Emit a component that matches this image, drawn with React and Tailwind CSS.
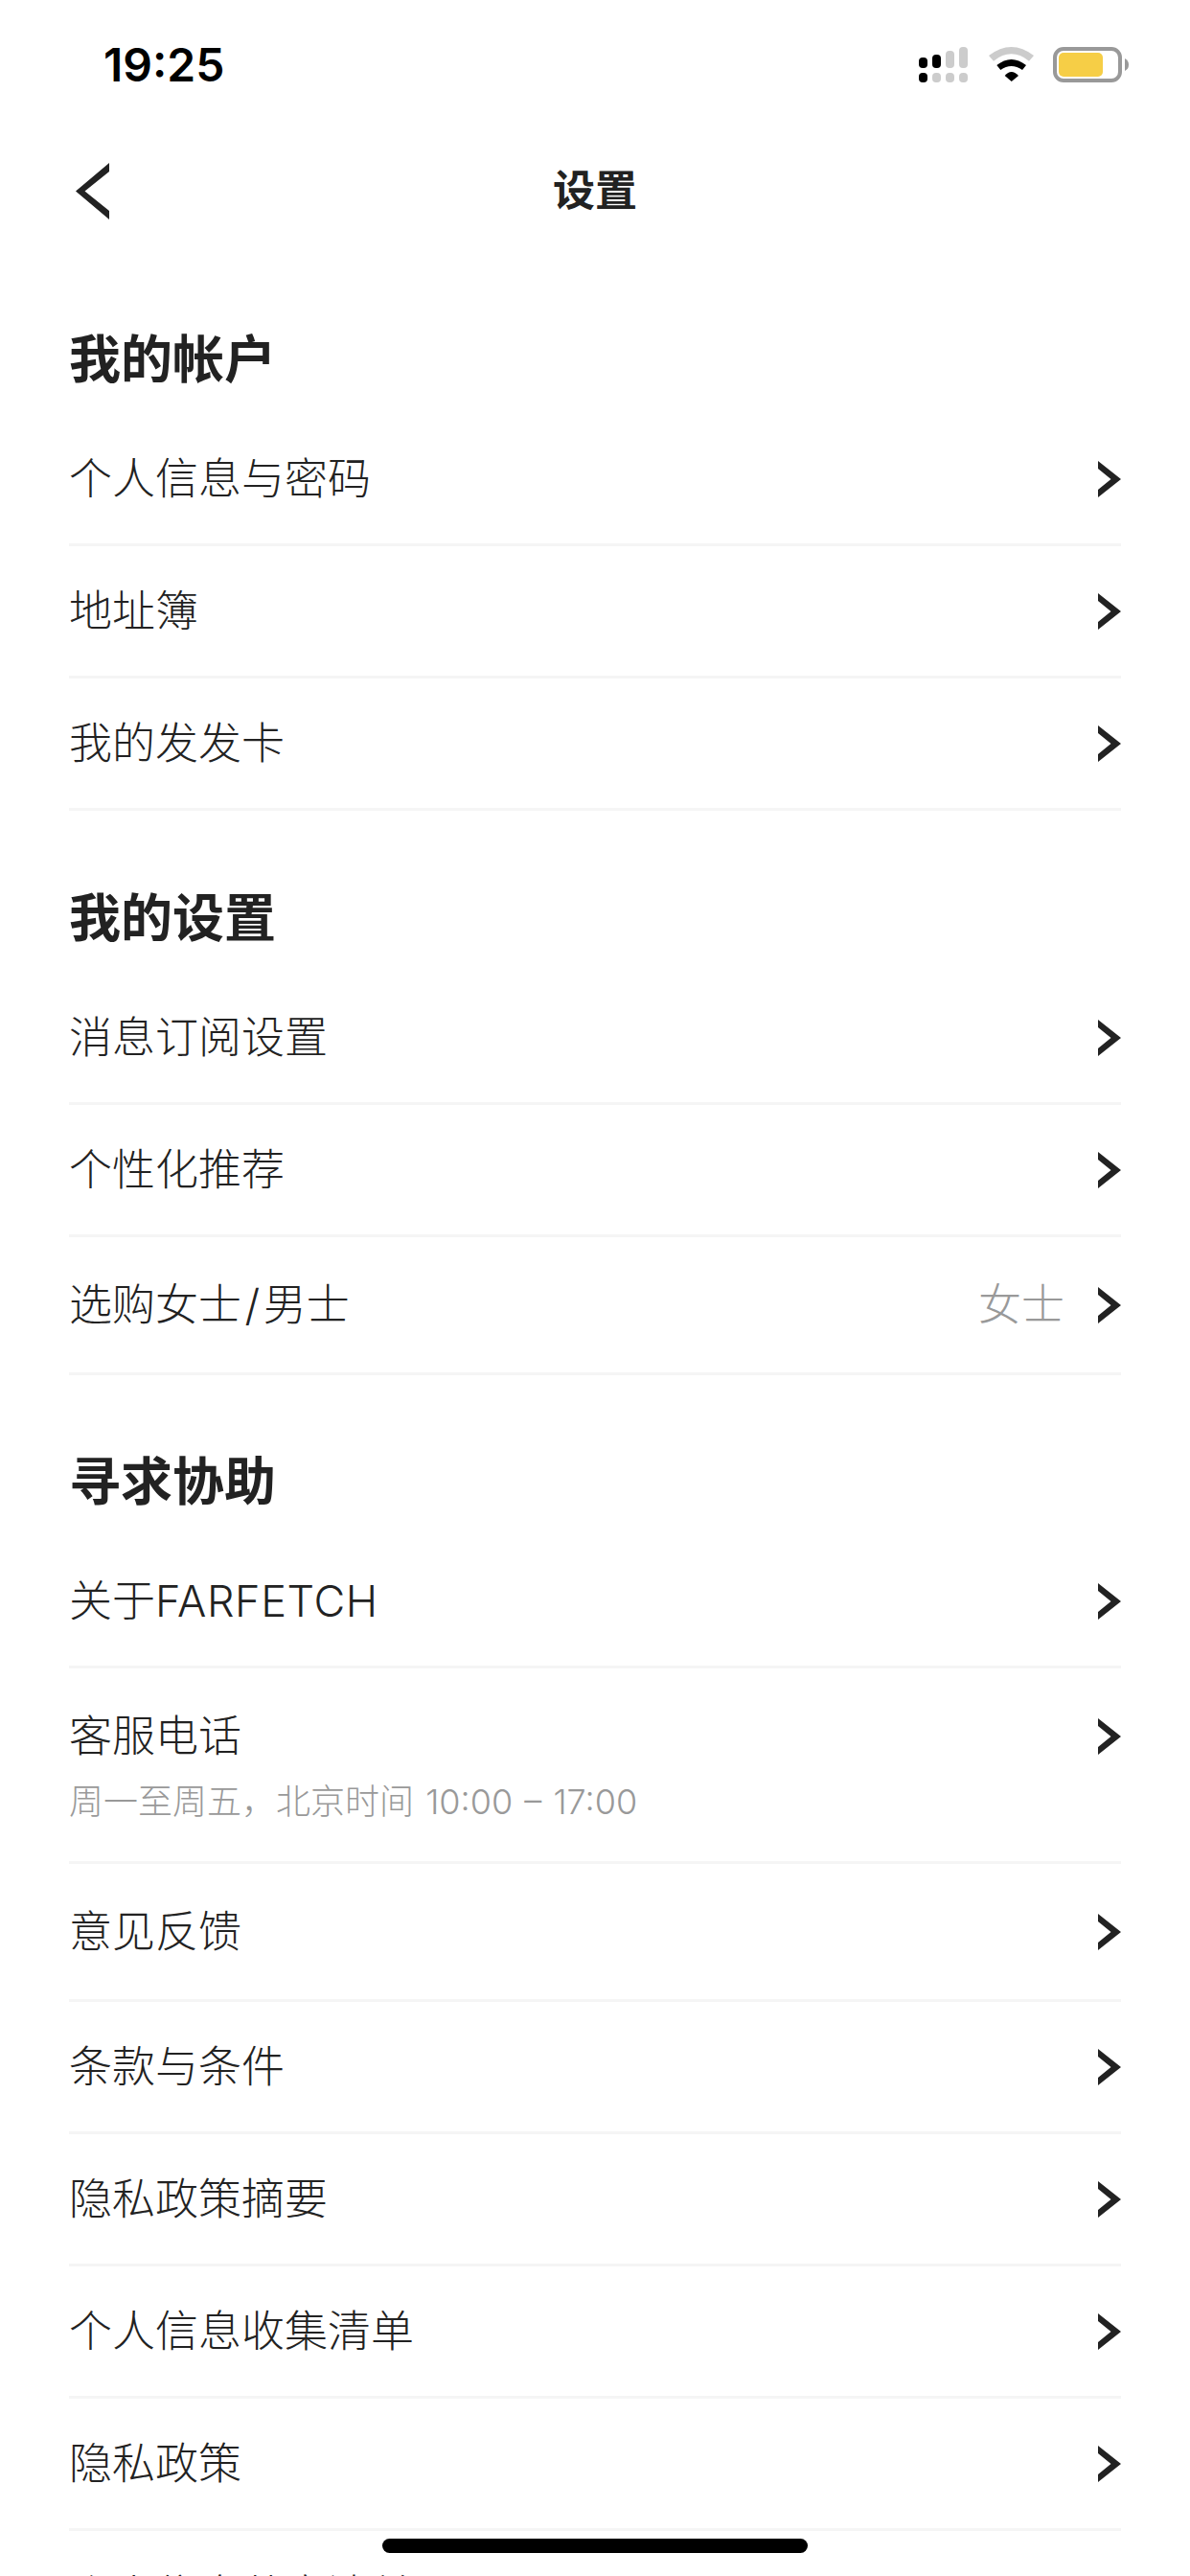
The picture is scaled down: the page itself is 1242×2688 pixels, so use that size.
import React from "react";

const FONT = "font-['Inter','Noto_Sans_CJK_SC',sans-serif]";

function Chevron() {
  return (
    <svg width="24" height="38" viewBox="0 0 24 38" className="shrink-0">
      <polygon points="0,0 24,19 0,38 0,30 13.5,19 0,8" fill="#222222" />
    </svg>
  );
}

function Row({ title, value, sub, height = "h-[138px]" }) {
  if (sub) {
    return (
      <div className={`${height} flex items-start justify-between border-b-[3px] border-[#f5f5f5] pt-[48px]`}>
        <div className="flex flex-col">
          <span className="text-[45px] leading-[46px] font-light text-[#222222]">{title}</span>
          <span className="mt-[22px] text-[36px] leading-[46px] font-light text-[#999999] [word-spacing:2px]">{sub}</span>
        </div>
        <div className="mt-[4px]">
          <Chevron />
        </div>
      </div>
    );
  }
  return (
    <div className={`${height} flex items-center justify-between border-b-[3px] border-[#f5f5f5]`}>
      <span className="text-[45px] leading-[46px] font-light text-[#222222] whitespace-nowrap">{title}</span>
      <div className="flex items-center gap-[35px]">
        {value && <span className="text-[45px] leading-[46px] font-light text-[#999999]">{value}</span>}
        <Chevron />
      </div>
    </div>
  );
}

function Heading({ children }) {
  return (
    <div className="h-[112px] flex items-center text-[54px] leading-[60px] font-bold text-[#222222]">
      {children}
    </div>
  );
}

function Signal() {
  const black = "#000000";
  const gray = "#cccccc";
  return (
    <svg width="51" height="37" viewBox="0 0 51 37">
      <rect x="0" y="11" width="9" height="11" rx="4" fill={black} />
      <rect x="14" y="8" width="9" height="14" rx="4" fill={black} />
      <rect x="28" y="4" width="9" height="18" rx="4" fill={gray} />
      <rect x="42" y="0" width="9" height="22" rx="4" fill={gray} />
      <rect x="0" y="27" width="9" height="10" rx="4" fill={black} />
      <rect x="14" y="27" width="9" height="10" rx="4" fill={gray} />
      <rect x="28" y="27" width="9" height="10" rx="4" fill={gray} />
      <rect x="42" y="27" width="9" height="10" rx="4" fill={gray} />
    </svg>
  );
}

function Wifi() {
  return (
    <svg width="47" height="36" viewBox="0 0 47 36">
      <path d="M0 9 Q23.5 -9 47 9 L42 14.7 Q23.5 0 5 14.7 Z" fill="#cccccc" />
      <path d="M8.3 19 Q23.5 7 39 19 L35 24 Q23.5 16 12.3 24 Z" fill="#000000" />
      <path d="M16.7 30 Q23.5 22 31 30 L23.7 36 Z" fill="#000000" />
    </svg>
  );
}

function Battery() {
  return (
    <svg width="79" height="37" viewBox="0 0 79 37">
      <rect x="2" y="2" width="68" height="33" rx="9" fill="none" stroke="#999999" strokeWidth="4" />
      <rect x="6" y="6" width="46" height="25" rx="5" fill="#f6ce46" />
      <path d="M75 12 Q79 14 79 18.5 Q79 23 75 25 Z" fill="#999999" />
    </svg>
  );
}

export default function App() {
  return (
    <div className={`relative h-[2688px] w-[1242px] overflow-hidden bg-white ${FONT}`}>
      <div className="h-[132px] flex items-start justify-between pl-[108px] pr-[64px]">
        <span className="mt-[42px] text-[48px] leading-[52px] font-semibold text-black">19:25</span>
        <div className="mt-[49px] flex items-start">
          <Signal />
          <div className="ml-[22px]">
            <Wifi />
          </div>
          <div className="ml-[20px]">
            <Battery />
          </div>
        </div>
      </div>

      <div className="h-[134px] grid grid-cols-[1fr_auto_1fr] items-center pl-[79px] pr-[79px]">
        <svg width="35" height="59" viewBox="0 0 35 59">
          <polygon points="35,0 0,29.5 35,59 35,50 9.5,29.5 35,9" fill="#222222" />
        </svg>
        <span className="text-[44px] leading-[50px] font-semibold text-[#222222]">设置</span>
        <span />
      </div>

      <div className="px-[72px] pt-[54px]">
        <section>
          <Heading>我的帐户</Heading>
          <Row title="个人信息与密码" />
          <Row title="地址簿" />
          <Row title="我的发发卡" />
        </section>
        <section className="mt-[57px]">
          <Heading>我的设置</Heading>
          <Row title="消息订阅设置" />
          <Row title="个性化推荐" />
          <Row
            title={
              <>
                选购女士<span className="mx-[3.5px]">/</span>男士
              </>
            }
            value="女士"
            height="h-[144px]"
          />
        </section>
        <section className="mt-[56px]">
          <Heading>寻求协助</Heading>
          <Row
            title={
              <>
                关于<span className="tracking-[0.6px]">FARFETCH</span>
              </>
            }
          />
          <Row title="客服电话" sub="周一至周五，北京时间 10:00 – 17:00" height="h-[204px]" />
          <Row title="意见反馈" height="h-[144px]" />
          <Row title="条款与条件" />
          <Row title="隐私政策摘要" />
          <Row title="个人信息收集清单" />
          <Row title="隐私政策" />
          <Row title="个人信息共享清单" />
        </section>
      </div>

      <div className="absolute left-[399px] top-[2649px] h-[15px] w-[444px] rounded-full bg-black" />
    </div>
  );
}
